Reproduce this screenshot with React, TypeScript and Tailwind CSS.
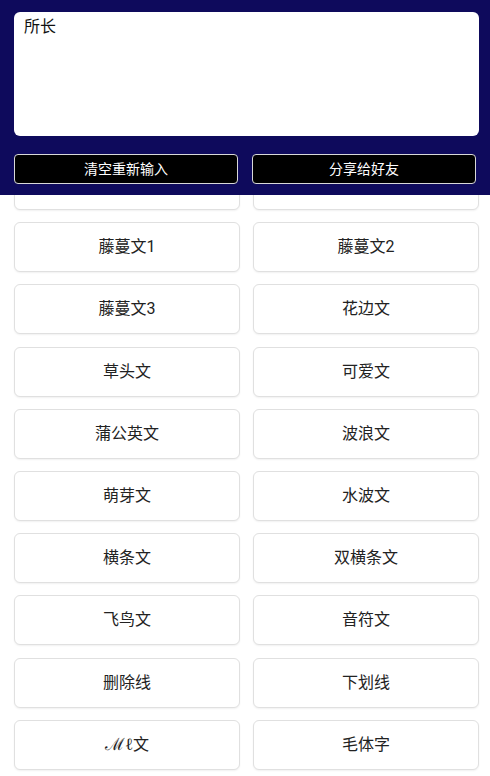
import { useState } from "react";

const styles: string[] = [
  "",
  "",
  "藤蔓文1",
  "藤蔓文2",
  "藤蔓文3",
  "花边文",
  "草头文",
  "可爱文",
  "蒲公英文",
  "波浪文",
  "萌芽文",
  "水波文",
  "横条文",
  "双横条文",
  "飞鸟文",
  "音符文",
  "删除线",
  "下划线",
  "ℳℓ文",
  "毛体字",
];

export default function App() {
  const [text, setText] = useState("所长");

  return (
    <div
      className="h-[776px] w-[490px] overflow-hidden bg-white"
      style={{ fontFamily: 'Roboto, "Noto Sans CJK SC", sans-serif' }}
    >
      {/* Header */}
      <div className="relative z-10 bg-[#0e0a5c] pt-[12px] pb-[11px]">
        <textarea
          value={text}
          onChange={(e) => setText(e.target.value)}
          className="ml-[14px] block h-[124px] w-[465px] resize-none rounded-[6px] bg-white px-[10px] pt-[3px] text-[16px] leading-[24px] text-[#111] outline-none"
        />
        <div className="mt-[18px] grid grid-cols-2 gap-x-[14px] px-[14px]">
          <button className="h-[30px] rounded-[4px] border border-[#d8d8d8] bg-black text-[14px] text-white">
            清空重新输入
          </button>
          <button className="h-[30px] rounded-[4px] border border-[#d8d8d8] bg-black text-[14px] text-white">
            分享给好友
          </button>
        </div>
      </div>

      {/* Style list, scrolled so the first row sits under the header */}
      <div className="-mt-[35px] grid grid-cols-2 gap-x-[13px] gap-y-[12.2px] pl-[14px] pr-[11px]">
        {styles.map((name, i) => (
          <button
            key={i}
            className="flex h-[50px] items-center justify-center rounded-[6px] border border-[#e0e0e0] bg-white text-[16px] text-[#222] shadow-[0_1px_2px_rgba(0,0,0,0.06)]"
          >
            {name.startsWith("ℳ") ? (
              <span>
                <span className="text-[17px]" style={{ fontFamily: '"DejaVu Serif", serif' }}>
                  ℳℓ
                </span>
                文
              </span>
            ) : (
              name
            )}
          </button>
        ))}
      </div>
    </div>
  );
}
